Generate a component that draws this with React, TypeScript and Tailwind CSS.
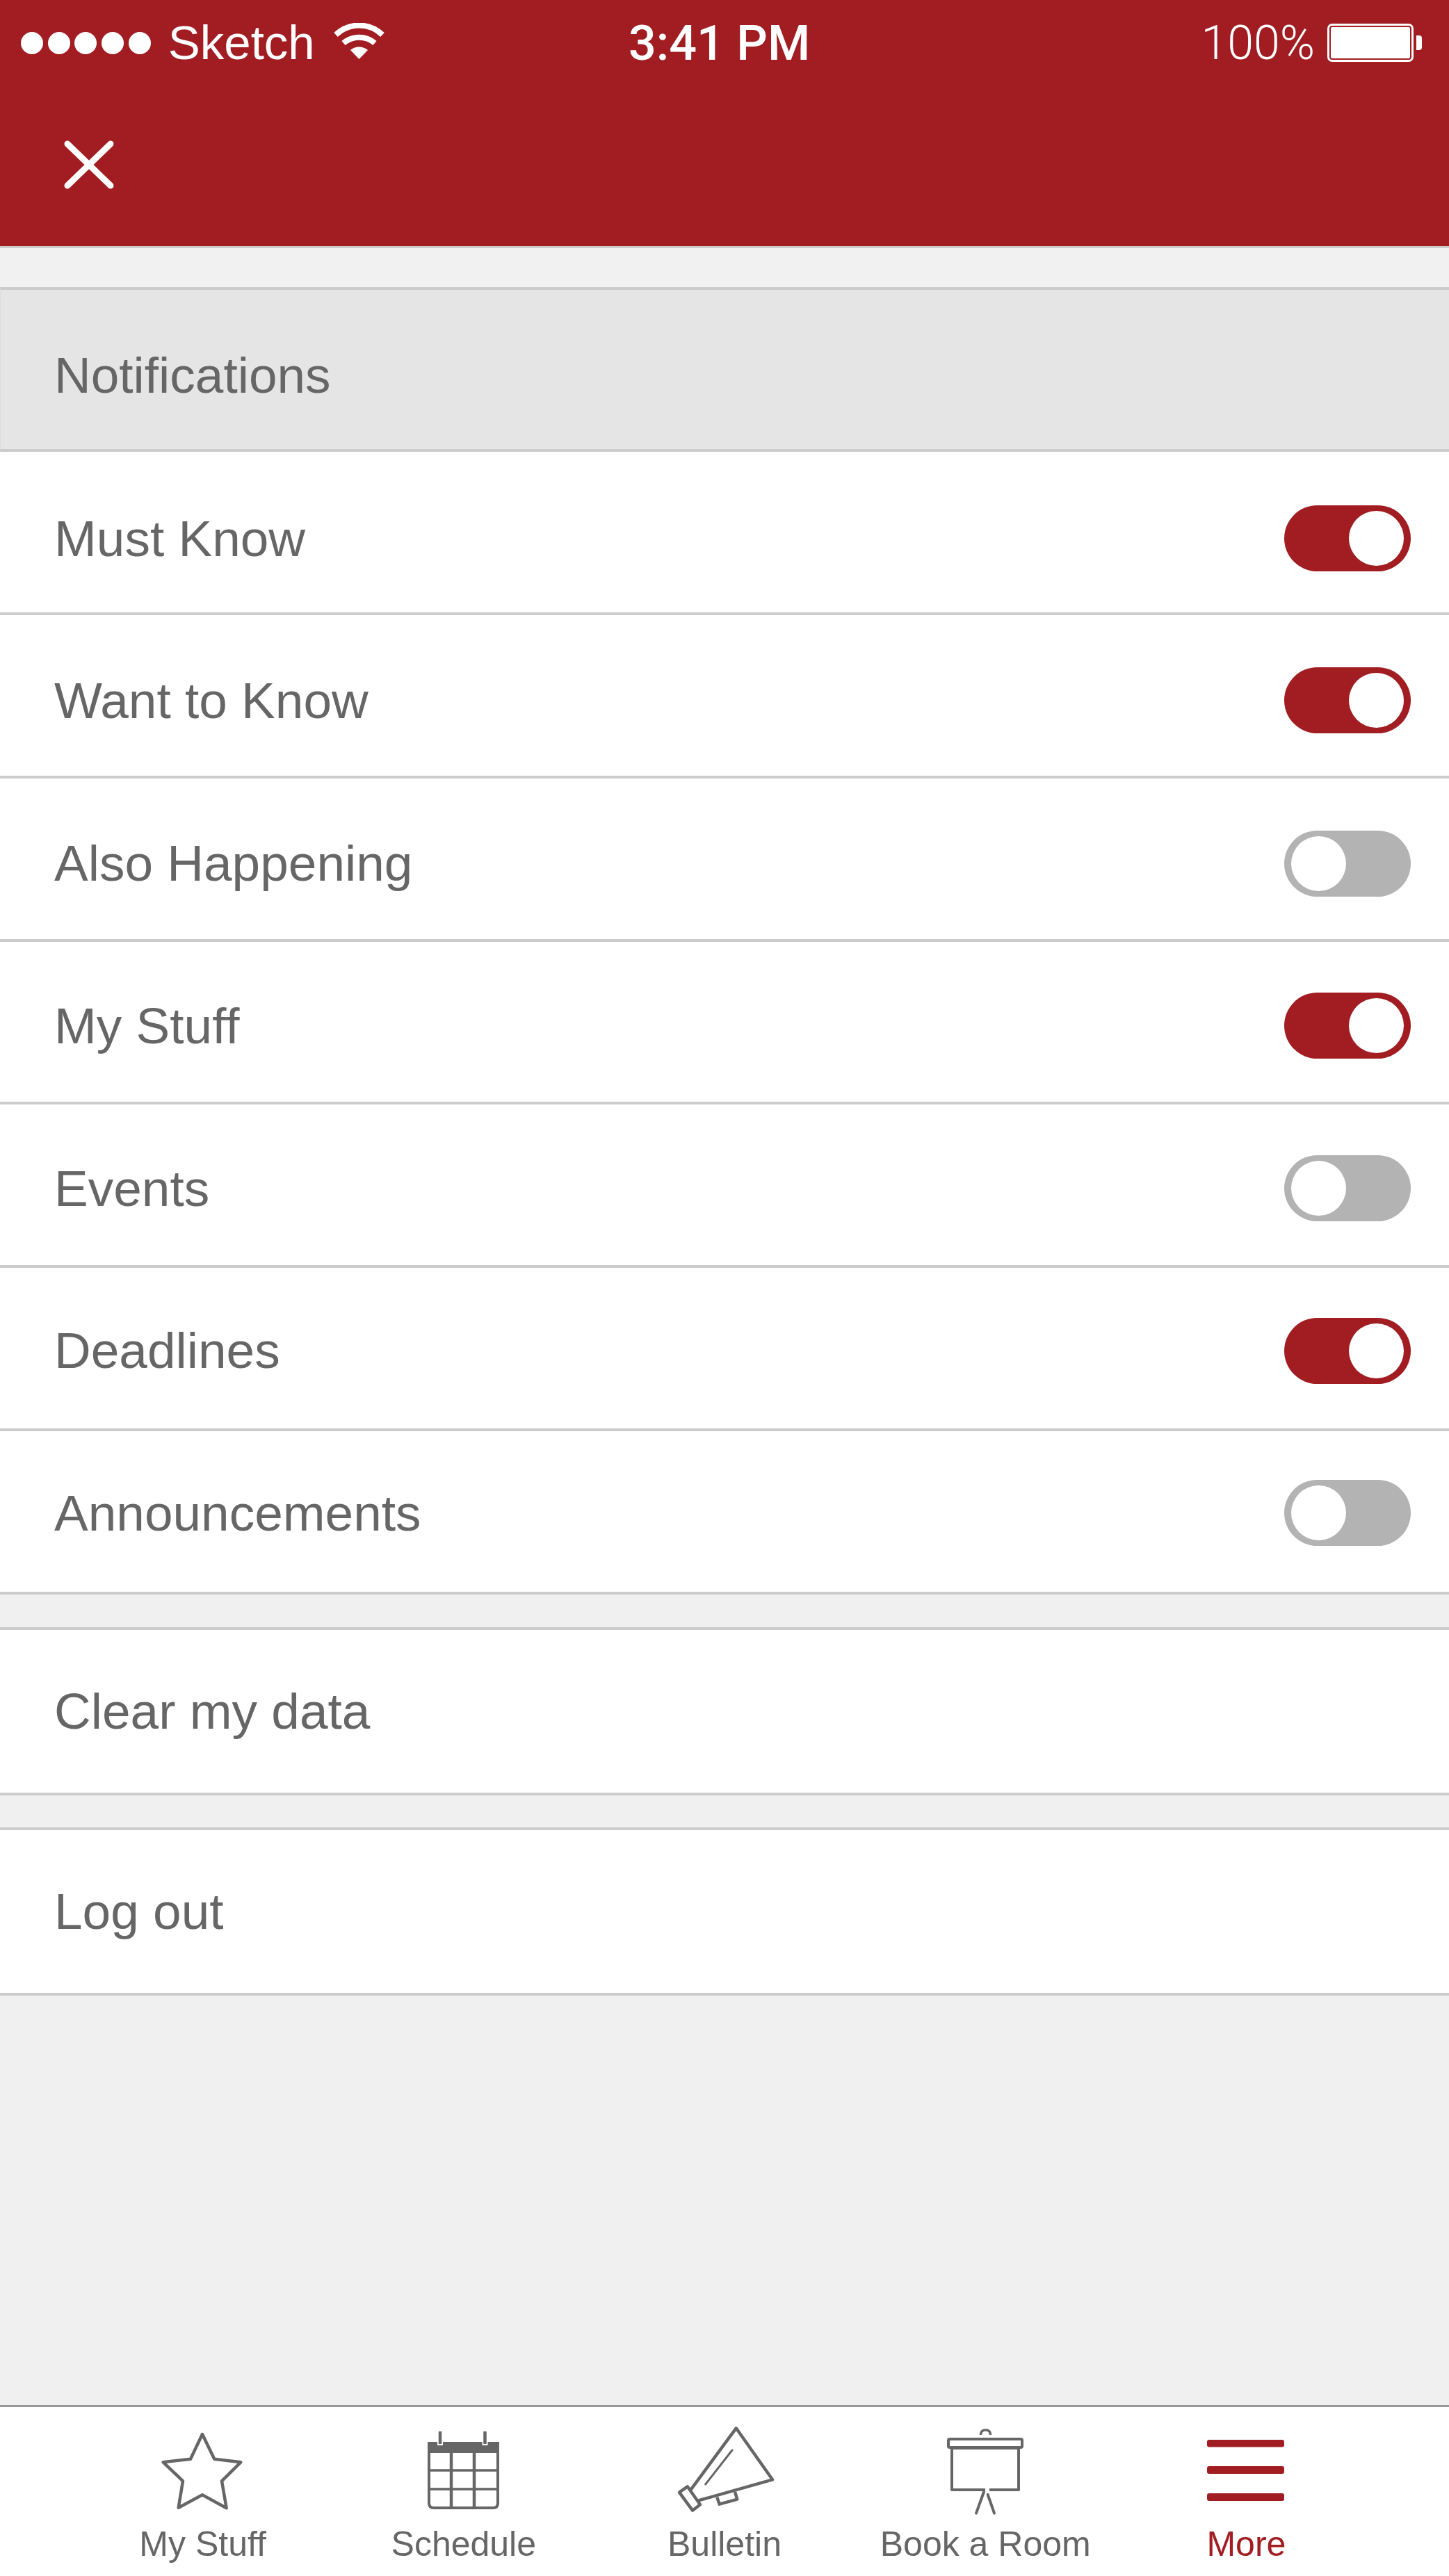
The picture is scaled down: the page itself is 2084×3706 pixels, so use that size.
const ROWS = [
  { label: 'Must Know', on: true, pad: 'pt-[18px]' },
  { label: 'Want to Know', on: true, pad: 'pt-[15px]' },
  { label: 'Also Happening', on: false, pad: 'pt-[14px]' },
  { label: 'My Stuff', on: true, pad: 'pt-[12px]' },
  { label: 'Events', on: false, pad: 'pt-[10px]' },
  { label: 'Deadlines', on: true, pad: 'pt-[7px]' },
  { label: 'Announcements', on: false, pad: 'pt-[5px]' },
];

function StarIcon() {
  return (
    <svg viewBox="0 0 135 130" className="h-[130px] w-[135px]" fill="none" stroke="#666666" strokeWidth="4.5" strokeLinejoin="round">
      <path d="M67 12 L84.3 47.7 L122.3 52.3 L95 79.3 L101.7 118.3 L67 99.3 L32.7 117.7 L39 79.3 L10.7 52.3 L50 47.7 Z" />
    </svg>
  );
}

function CalendarIcon() {
  return (
    <svg viewBox="0 0 135 130" className="h-[130px] w-[135px]" fill="none" stroke="#666666" strokeWidth="3.5">
      <path d="M18 30 H117 V111 Q117 118 110 118 H25 Q18 118 18 111 Z" strokeWidth="4" />
      <rect x="16" y="23" width="103" height="16" fill="#666666" stroke="none" />
      <path d="M50 39 V119 M83 39 V119" strokeWidth="4.5" />
      <path d="M17 64 H118 M17 91 H118" />
      <path d="M34 8 V28 M98.5 8 V28" stroke="#ffffff" strokeWidth="8" />
      <path d="M34 8 V26 M98.5 8 V26" strokeWidth="4.5" />
    </svg>
  );
}

function MegaphoneIcon() {
  return (
    <svg viewBox="0 0 150 130" className="h-[130px] w-[150px]" fill="none" stroke="#666666" strokeWidth="4.5" strokeLinejoin="round">
      <path d="M26.7 91.7 L91.7 3.3 L144 77.3 L36.7 107.7" />
      <path d="M10 95.7 L21.7 87.3 L40 113.3 L29 121.7 Z" />
      <path d="M64.3 102.7 L67.7 112.7 L93.3 105.7 L90 95" />
      <path d="M86 35 L47.7 84" strokeWidth="3" strokeLinecap="round" />
    </svg>
  );
}

function ScreenIcon() {
  return (
    <svg viewBox="0 0 150 130" className="h-[130px] w-[150px]" fill="none" stroke="#666666" strokeWidth="4" strokeLinejoin="round">
      <rect x="22" y="19" width="106" height="12" rx="2" />
      <path d="M75 92 H27 V32 H123 V92 H81" />
      <path d="M73 95 L62 125.7 M78.7 99 L88 125.7" strokeLinecap="round" />
      <path d="M68.5 13 Q68.5 6 75.5 6 Q82.5 6 82.5 13" strokeWidth="3.5" />
    </svg>
  );
}

function MenuIcon() {
  return (
    <svg viewBox="0 0 150 130" className="h-[130px] w-[150px]" fill="#a11d22">
      <rect x="19" y="20" width="111" height="10.5" rx="3" />
      <rect x="19" y="58" width="111" height="11" rx="3" />
      <rect x="19" y="97" width="111" height="11" rx="3" />
    </svg>
  );
}

const TABS = [
  { label: 'My Stuff', icon: <StarIcon /> },
  { label: 'Schedule', icon: <CalendarIcon /> },
  { label: 'Bulletin', icon: <MegaphoneIcon /> },
  { label: 'Book a Room', icon: <ScreenIcon /> },
  { label: 'More', icon: <MenuIcon />, active: true },
];

function WifiIcon() {
  return (
    <svg viewBox="0 0 73 52" className="h-[52px] w-[73px]" fill="none" stroke="#ffffff" strokeWidth="8">
      <path d="M3 17 C 22 -1, 51 -1, 70 17" />
      <path d="M14 29 C 27 18, 46 18, 59 29" />
      <path d="M36.5 52 L24 39 C 31 33 42 33 49 39 Z" fill="#ffffff" stroke="none" />
    </svg>
  );
}

function Toggle({ on }: { on: boolean }) {
  return (
    <div
      className={`flex h-[95px] w-[182px] items-center rounded-full px-[10px] ${
        on ? 'justify-end bg-[#a11d22]' : 'justify-start bg-[#b3b3b3]'
      }`}
    >
      <div className="h-[79px] w-[79px] rounded-full bg-white" />
    </div>
  );
}

export default function App() {
  return (
    <div className="flex h-[3706px] w-[2084px] flex-col overflow-hidden bg-[#f0f0f0] font-['Liberation_Sans',sans-serif] text-[73px] text-[#666666]">
      {/* status bar + nav */}
      <header className="h-[354px] shrink-0 bg-[#a11d22] text-white">
        <div className="flex h-[120px] items-center pt-[3px] font-['Roboto',sans-serif] text-[68px] leading-none">
          <div className="flex w-[904px] items-center pl-[30px]">
            <div className="flex gap-[6.7px]">
              <span className="h-[32px] w-[32px] rounded-full bg-white" />
              <span className="h-[32px] w-[32px] rounded-full bg-white" />
              <span className="h-[32px] w-[32px] rounded-full bg-white" />
              <span className="h-[32px] w-[32px] rounded-full bg-white" />
              <span className="h-[32px] w-[32px] rounded-full bg-white" />
            </div>
            <span className="ml-[25px] font-['Liberation_Sans',sans-serif] text-[69px]">Sketch</span>
            <span className="ml-[27px] -mt-[5px]">
              <WifiIcon />
            </span>
          </div>
          <span className="text-[70px] font-medium">3:41 PM</span>
          <div className="ml-auto flex items-center pr-[39px]">
            <span className="font-light">100%</span>
            <div className="ml-[18px] h-[55px] w-[124px] rounded-[7px] border-[3px] border-white p-[2px]">
              <div className="h-full w-full rounded-[2px] bg-white" />
            </div>
            <div className="ml-[4px] h-[21px] w-[8px] rounded-r-[4px] bg-white" />
          </div>
        </div>
        <div className="flex h-[234px] items-center pl-[92px]">
          <svg viewBox="0 0 72 70" className="h-[70px] w-[72px]" fill="none" stroke="#ffffff" strokeWidth="9" strokeLinecap="round">
            <path d="M5 5 L67 65 M67 5 L5 65" />
          </svg>
        </div>
      </header>

      <div className="h-[59px] shrink-0 border-t-[3px] border-[#cccccc] bg-[#f1f1f1]" />

      <div className="flex h-[237px] shrink-0 items-center border-y-[4px] border-l border-y-[#cccccc] border-l-[#dddddd] bg-[#e5e5e5] pt-[16px] pl-[77px]">
        Notifications
      </div>

      <div>
        {ROWS.map((row) => (
          <div
            key={row.label}
            className={`flex h-[234.85px] items-center justify-between border-b-[4px] border-[#cccccc] bg-white pr-[55px] pl-[78px] ${row.pad}`}
          >
            <span>{row.label}</span>
            <Toggle on={row.on} />
          </div>
        ))}
      </div>

      <div className="mt-[47px] flex h-[242px] shrink-0 items-center border-y-[4px] border-[#cccccc] bg-white pl-[78px]">
        Clear my data
      </div>
      <div className="mt-[46px] flex h-[242px] shrink-0 items-center border-y-[4px] border-[#cccccc] bg-white pl-[78px]">
        Log out
      </div>

      {/* tab bar */}
      <nav className="mt-auto grid h-[246px] shrink-0 grid-cols-5 border-t-[3px] border-[#999999] bg-white px-[104px] pt-[27px]">
        {TABS.map((tab) => (
          <div key={tab.label} className={`flex flex-col items-center ${tab.active ? 'text-[#a11d22]' : ''}`}>
            {tab.icon}
            <span className="mt-[11px] text-[50px] leading-[58px]">{tab.label}</span>
          </div>
        ))}
      </nav>
    </div>
  );
}
